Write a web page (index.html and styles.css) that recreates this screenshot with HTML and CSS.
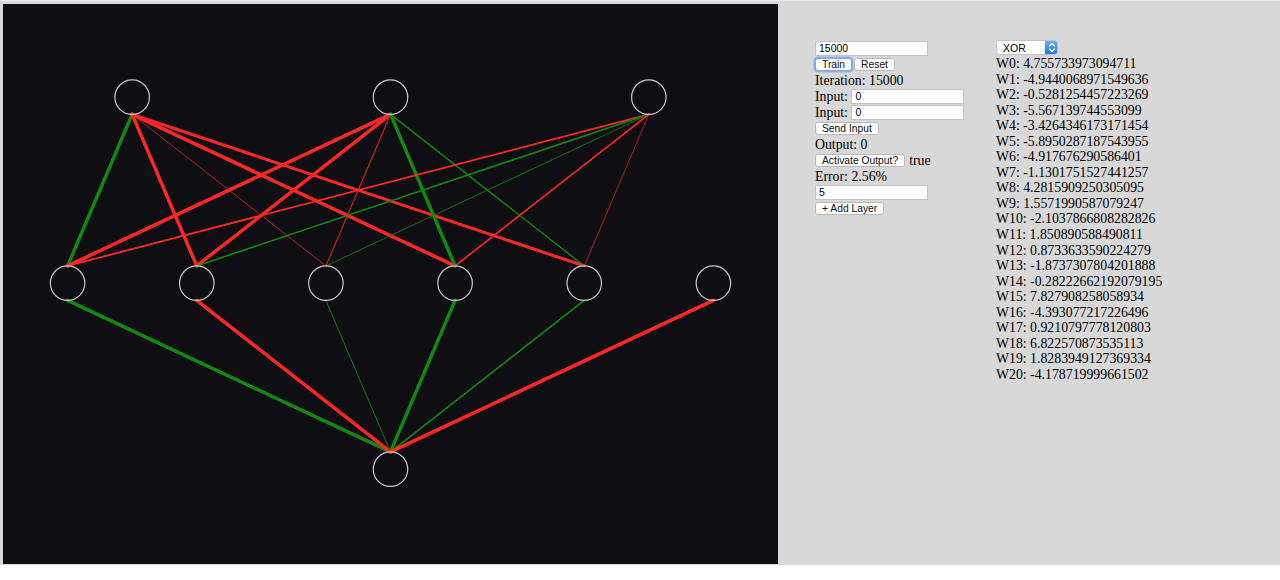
FILE: index.html
```html
<!DOCTYPE html>
<html>
<head>
<meta charset="utf-8">
<link rel="stylesheet" href="styles.css">
</head>
<body>
<div class="app">
  <div class="canvas">
    <svg class="net" width="775" height="560" viewBox="0 0 900 650">
      <g class="edges">
        <line class="pos" x1="150" y1="128" x2="75" y2="304" stroke-width="4"/>
        <line class="neg" x1="150" y1="128" x2="225" y2="304" stroke-width="4"/>
        <line class="neg" x1="150" y1="128" x2="375" y2="304" stroke-width="0.8"/>
        <line class="neg" x1="150" y1="128" x2="525" y2="304" stroke-width="4"/>
        <line class="neg" x1="150" y1="128" x2="675" y2="304" stroke-width="3.43"/>
        <line class="neg" x1="450" y1="128" x2="75" y2="304" stroke-width="4"/>
        <line class="neg" x1="450" y1="128" x2="225" y2="304" stroke-width="4"/>
        <line class="neg" x1="450" y1="128" x2="375" y2="304" stroke-width="1.13"/>
        <line class="pos" x1="450" y1="128" x2="525" y2="304" stroke-width="4"/>
        <line class="pos" x1="450" y1="128" x2="675" y2="304" stroke-width="1.56"/>
        <line class="neg" x1="750" y1="128" x2="75" y2="304" stroke-width="2.1"/>
        <line class="pos" x1="750" y1="128" x2="225" y2="304" stroke-width="1.85"/>
        <line class="pos" x1="750" y1="128" x2="375" y2="304" stroke-width="0.9"/>
        <line class="neg" x1="750" y1="128" x2="525" y2="304" stroke-width="1.87"/>
        <line class="neg" x1="750" y1="128" x2="675" y2="304" stroke-width="0.75"/>
        <line class="pos" x1="75" y1="344" x2="450" y2="520" stroke-width="4"/>
        <line class="neg" x1="225" y1="344" x2="450" y2="520" stroke-width="4"/>
        <line class="pos" x1="375" y1="344" x2="450" y2="520" stroke-width="0.92"/>
        <line class="pos" x1="525" y1="344" x2="450" y2="520" stroke-width="4"/>
        <line class="pos" x1="675" y1="344" x2="450" y2="520" stroke-width="1.83"/>
        <line class="neg" x1="825" y1="344" x2="450" y2="520" stroke-width="4"/>
      </g>
      <g class="nodes">
        <circle cx="150" cy="108" r="20"/>
        <circle cx="450" cy="108" r="20"/>
        <circle cx="750" cy="108" r="20"/>
        <circle cx="75" cy="324" r="20"/>
        <circle cx="225" cy="324" r="20"/>
        <circle cx="375" cy="324" r="20"/>
        <circle cx="525" cy="324" r="20"/>
        <circle cx="675" cy="324" r="20"/>
        <circle cx="825" cy="324" r="20"/>
        <circle cx="450" cy="540" r="20"/>
      </g>
    </svg>
  </div>

  <div class="controls">
    <div class="row"><span class="field wide">15000</span></div>
    <div class="row btns">
      <span class="btn focus">Train</span>
      <span class="btn">Reset</span>
    </div>
    <div class="row">Iteration: 15000</div>
    <div class="row">Input:&nbsp;<span class="field short">0</span></div>
    <div class="row">Input:&nbsp;<span class="field short">0</span></div>
    <div class="row"><span class="btn">Send Input</span></div>
    <div class="row">Output: 0</div>
    <div class="row btns wide-gap"><span class="btn">Activate Output?</span><span>true</span></div>
    <div class="row">Error: 2.56%</div>
    <div class="row tight"><span class="field wide">5</span></div>
    <div class="row"><span class="btn">+ Add Layer</span></div>
  </div>

  <div class="weights">
    <div class="select">
      <span class="select-label">XOR</span>
      <span class="stepper">
        <svg width="8" height="11" viewBox="0 0 8 11"><path d="M1.5 4 L4 1.5 L6.5 4 M1.5 7 L4 9.5 L6.5 7" fill="none" stroke="#fff" stroke-width="1.3" stroke-linecap="round" stroke-linejoin="round"/></svg>
      </span>
    </div>
    <div class="w">W0: 4.755733973094711</div>
    <div class="w">W1: -4.9440068971549636</div>
    <div class="w">W2: -0.5281254457223269</div>
    <div class="w">W3: -5.567139744553099</div>
    <div class="w">W4: -3.4264346173171454</div>
    <div class="w">W5: -5.8950287187543955</div>
    <div class="w">W6: -4.917676290586401</div>
    <div class="w">W7: -1.1301751527441257</div>
    <div class="w">W8: 4.2815909250305095</div>
    <div class="w">W9: 1.5571990587079247</div>
    <div class="w">W10: -2.1037866808282826</div>
    <div class="w">W11: 1.850890588490811</div>
    <div class="w">W12: 0.8733633590224279</div>
    <div class="w">W13: -1.8737307804201888</div>
    <div class="w">W14: -0.28222662192079195</div>
    <div class="w">W15: 7.827908258058934</div>
    <div class="w">W16: -4.393077217226496</div>
    <div class="w">W17: 0.9210797778120803</div>
    <div class="w">W18: 6.822570873535113</div>
    <div class="w">W19: 1.8283949127369334</div>
    <div class="w">W20: -4.178719999661502</div>
  </div>
</div>
</body>
</html>
```

FILE: styles.css
```css
html, body {
  margin: 0;
  padding: 0;
  background: #ffffff;
}

.app {
  display: flex;
  align-items: flex-start;
  height: 565px;
  box-sizing: border-box;
  padding: 4px 0 0 3px;
  background: #d8d8d8;
  border-top: 1px solid #ececec;
  font-family: "Liberation Serif", "Times New Roman", serif;
  font-size: 13.8px;
  line-height: 16px;
  color: #000;
}

.canvas {
  width: 775px;
  height: 560px;
  margin-top: -1px;
  background: #0f0f13;
  flex: none;
}

.net {
  display: block;
}

.edges line {
  stroke-linecap: round;
}

.edges .pos {
  stroke: #128a12;
}

.edges .neg {
  stroke: #ff2626;
}

.nodes circle {
  fill: none;
  stroke: #c8c8c8;
  stroke-width: 1.4;
}

.controls {
  flex: none;
  width: 181px;
  margin-left: 37px;
  padding-top: 35.5px;
  display: flex;
  flex-direction: column;
  align-items: flex-start;
}

.row {
  height: 16px;
  display: flex;
  align-items: center;
  white-space: nowrap;
}

.row.tight {
  height: 15px;
  margin-bottom: 1px;
}

.row.btns {
  gap: 2px;
}

.row.wide-gap {
  gap: 4px;
}

.field {
  box-sizing: border-box;
  height: 15px;
  background: #fff;
  border: 1px solid #c4c4c4;
  font-family: "Liberation Sans", Arial, sans-serif;
  font-size: 10.5px;
  line-height: 13px;
  padding: 0 3px;
  color: #000;
}

.field.wide {
  width: 113px;
}

.field.short {
  width: 113px;
}

.btn {
  box-sizing: border-box;
  height: 13.5px;
  display: inline-flex;
  align-items: center;
  background: #fff;
  border: 1px solid #b9b9b9;
  border-radius: 3px;
  padding: 0 6px;
  font-family: "Liberation Sans", Arial, sans-serif;
  font-size: 10.3px;
  line-height: 11px;
  color: #111;
}

.btn.focus {
  box-shadow: 0 0 0 1.5px #8db2e8;
  border-color: #7ea4dc;
}

.weights {
  flex: none;
  padding-top: 35px;
  display: flex;
  flex-direction: column;
  align-items: flex-start;
}

.select {
  box-sizing: border-box;
  width: 62px;
  height: 15px;
  margin-bottom: 1px;
  display: flex;
  align-items: center;
  justify-content: space-between;
  background: #fff;
  border: 1px solid #c2c2c2;
  border-radius: 3px;
  overflow: hidden;
  font-family: "Liberation Sans", Arial, sans-serif;
  font-size: 10.5px;
}

.select-label {
  padding-left: 6px;
}

.stepper {
  width: 13px;
  height: 15px;
  display: flex;
  align-items: center;
  justify-content: center;
  background: linear-gradient(#6cb0fb, #1b6ff0);
  margin-right: -1px;
}

.stepper svg {
  display: block;
}

.w {
  height: 15.55px;
  line-height: 15.55px;
  white-space: nowrap;
}
```
